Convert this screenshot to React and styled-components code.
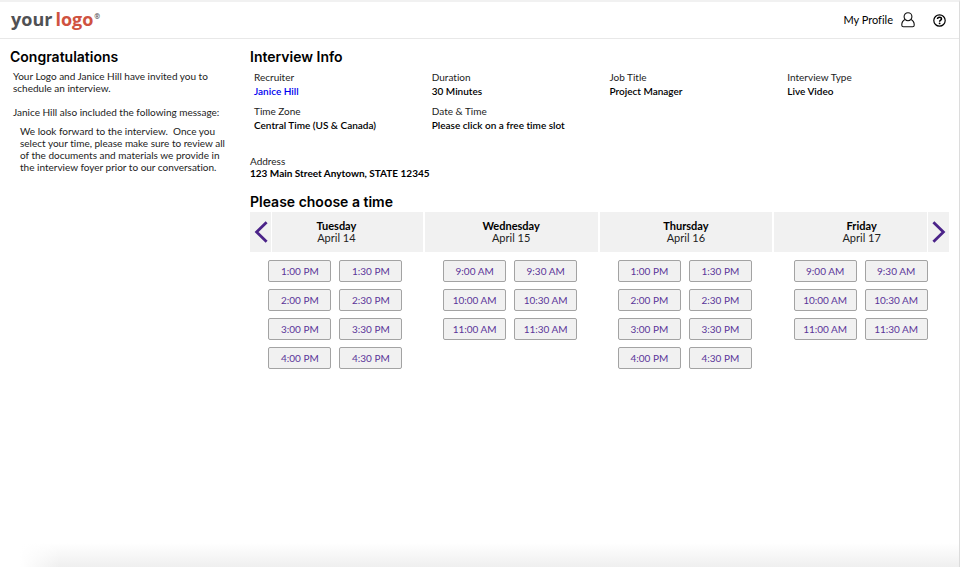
import React from 'react';
import styled, { createGlobalStyle } from 'styled-components';

const detailsData = [
  { label: 'Recruiter', value: 'Janice Hill', href: '#recruiter' },
  { label: 'Duration', value: '30 Minutes' },
  { label: 'Job Title', value: 'Project Manager' },
  { label: 'Interview Type', value: 'Live Video' },
  { label: 'Time Zone', value: 'Central Time (US & Canada)' },
  { label: 'Date & Time', value: 'Please click on a free time slot' },
];

const afternoon = ['1:00 PM', '1:30 PM', '2:00 PM', '2:30 PM', '3:00 PM', '3:30 PM', '4:00 PM', '4:30 PM'];
const morning = ['9:00 AM', '9:30 AM', '10:00 AM', '10:30 AM', '11:00 AM', '11:30 AM'];

const daysData = [
  { day: 'Tuesday', date: 'April 14', slots: afternoon },
  { day: 'Wednesday', date: 'April 15', slots: morning },
  { day: 'Thursday', date: 'April 16', slots: afternoon },
  { day: 'Friday', date: 'April 17', slots: morning },
];

function TopBar() {
  return (
    <HeaderStyled>
      <LogoStyled href="#home">
        your <span>logo</span>
        <sup>®</sup>
      </LogoStyled>
      <NavStyled>
        <ProfileStyled href="#profile">
          My Profile
          <svg width="14" height="16" viewBox="0 0 14 16" fill="none" stroke="#111" strokeWidth="1.1" strokeLinejoin="round">
            <path d="M4.1 7.4C3.5 6.6 3.1 5.7 3.1 4.7C3.1 2.4 4.7 0.8 7 0.8S10.9 2.4 10.9 4.7C10.9 5.7 10.5 6.6 9.9 7.4C8.4 9.2 5.6 9.2 4.1 7.4Z" />
            <path d="M4.1 7.4C2 8.4 0.8 10.3 0.8 12.6V13.2Q0.8 14.8 2.4 14.8H11.6Q13.2 14.8 13.2 13.2V12.6C13.2 10.3 12 8.4 9.9 7.4" />
          </svg>
        </ProfileStyled>
        <HelpStyled type="button" aria-label="Help">
          <svg width="13" height="13" viewBox="0 0 13 13" fill="none" stroke="#000">
            <circle cx="6.5" cy="6.5" r="5.7" strokeWidth="1.2" />
            <path d="M4.5 5.1C4.5 3.9 5.3 3.2 6.5 3.2S8.5 3.9 8.5 4.9C8.5 6.2 6.6 6.1 6.6 7.7" strokeWidth="1.5" />
            <circle cx="6.6" cy="9.4" r="0.9" fill="#000" stroke="none" />
          </svg>
        </HelpStyled>
      </NavStyled>
    </HeaderStyled>
  );
}

function Arrow({ side, label }) {
  return (
    <ArrowStyled type="button" $side={side} aria-label={label}>
      <svg width="14" height="22" viewBox="0 0 14 22" fill="none" stroke="#4b2389" strokeWidth="2.8">
        <path d={side === 'left' ? 'M12.6 1.2L2.6 11L12.6 20.8' : 'M1.4 1.2L11.4 11L1.4 20.8'} />
      </svg>
    </ArrowStyled>
  );
}

function App() {
  return (
    <PageStyled>
      <GlobalStyle />
      <TopBar />
      <MainStyled>
        <aside>
          <TitleStyled>Congratulations</TitleStyled>
          <MessageStyled>
            <p>Your Logo and Janice Hill have invited you to schedule an interview.</p>
            <p>Janice Hill also included the following message:</p>
            <blockquote>
              We look forward to the interview.&nbsp; Once you select your time, please make sure to review all of the
              documents and materials we provide in the interview foyer prior to our conversation.
            </blockquote>
          </MessageStyled>
        </aside>
        <section>
          <TitleStyled>Interview Info</TitleStyled>
          <DetailsStyled>
            {detailsData.map(({ label, value, href }) => (
              <div key={label}>
                <dt>{label}</dt>
                <dd>{href ? <a href={href}>{value}</a> : value}</dd>
              </div>
            ))}
          </DetailsStyled>
          <AddressStyled>
            Address
            <strong>123 Main Street Anytown, STATE 12345</strong>
          </AddressStyled>
          <TitleStyled>Please choose a time</TitleStyled>
          <CalendarStyled>
            {daysData.map(({ day, date, slots }) => (
              <div key={day}>
                <DayStyled>
                  <strong>{day}</strong>
                  {date}
                </DayStyled>
                <SlotsStyled>
                  {slots.map(slot => (
                    <SlotStyled key={slot} type="button">{slot}</SlotStyled>
                  ))}
                </SlotsStyled>
              </div>
            ))}
            <Arrow side="left" label="Previous days" />
            <Arrow side="right" label="Next days" />
          </CalendarStyled>
        </section>
      </MainStyled>
      <FooterShadeStyled />
    </PageStyled>
  );
}

export default App;

const GlobalStyle = createGlobalStyle`
  * {
    box-sizing: border-box;
  }

  body {
    margin: 0;
    background: #fff;
    color: #222;
    font: 10px/12px Lato, sans-serif;
    font-variant-ligatures: none;
  }

  p, dl, dd, h2, blockquote {
    margin: 0;
  }

  a {
    text-decoration: none;
  }

  button {
    padding: 0;
    font: inherit;
    cursor: pointer;
  }

  strong {
    display: block;
    color: #000;
  }
`

const PageStyled = styled.div`
  display: flex;
  flex-direction: column;
  min-height: 100vh;
  border-top: 2px solid #f1f1f1;
  border-right: 1px solid #dcdcdc;
`

const HeaderStyled = styled.header`
  display: flex;
  align-items: center;
  justify-content: space-between;
  height: 37px;
  padding: 0 13px 0 11px;
  border-bottom: 1px solid #e8e8e8;
`

const LogoStyled = styled.a`
  display: flex;
  align-items: center;
  gap: 3px;
  padding-bottom: 3px;
  color: #505154;
  font: bold 18px/24px "Open Sans", sans-serif;

  span {
    color: #cf5240;
  }

  sup {
    align-self: flex-start;
    margin-left: -2px;
    font-size: 7px;
    line-height: 20px;
  }
`

const NavStyled = styled.nav`
  display: flex;
  align-items: center;
  gap: 18px;
`

const ProfileStyled = styled.a`
  display: flex;
  align-items: center;
  gap: 8px;
  color: #000;
  font-size: 11px;
`

const HelpStyled = styled.button`
  display: flex;
  border: 0;
  background: none;
`

const MainStyled = styled.main`
  display: grid;
  grid-template-columns: 220px 1fr;
  gap: 20px;
  flex: 1;
  padding: 8px 10px 0;
`

const TitleStyled = styled.h2`
  color: #000;
  font: 600 14px/20px Inter, sans-serif;
`

const MessageStyled = styled.div`
  padding: 3px 0 0 3px;

  p + p {
    margin-top: 12px;
  }

  blockquote {
    padding: 7px 0 0 7px;
  }
`

const DetailsStyled = styled.dl`
  display: grid;
  grid-template-columns: repeat(4, 1fr);
  gap: 6px 16px;
  padding: 3px 0 0 4px;
  line-height: 14px;

  dd {
    color: #000;
    font-weight: 600;
  }

  a {
    color: #0000f0;
  }
`

const AddressStyled = styled.div`
  padding: 23px 0 13px;
`

const CalendarStyled = styled.div`
  position: relative;
  display: grid;
  grid-template-columns: repeat(3, 1fr) 25%;
  gap: 2px;
`

const DayStyled = styled.div`
  height: 40px;
  padding-top: 8px;
  background: #f1f1f1;
  font-size: 11px;
  text-align: center;
`

const SlotsStyled = styled.div`
  display: grid;
  grid-template-columns: 63px 63px;
  justify-content: center;
  gap: 7px 8px;
  padding: 8px 2px 0 0;
`

const SlotStyled = styled.button`
  height: 22px;
  border: 1px solid #a3a3a3;
  border-radius: 2px;
  background: #f1f1f1;
  color: #5b3599;
`

/* sits over the outer edge of the first and last day */
const ArrowStyled = styled.button`
  position: absolute;
  top: 0;
  ${props => props.$side}: 0;
  display: flex;
  align-items: center;
  justify-content: center;
  width: 22px;
  height: 40px;
  border: 0;
  border-${props => props.$side === 'left' ? 'right' : 'left'}: 1px solid #fff;
  background: #f1f1f1;
`

const FooterShadeStyled = styled.div`
  height: 24px;
  margin-left: 20px;
  background: linear-gradient(90deg, #fff, transparent 40px), linear-gradient(#fff, #efefef);
`
